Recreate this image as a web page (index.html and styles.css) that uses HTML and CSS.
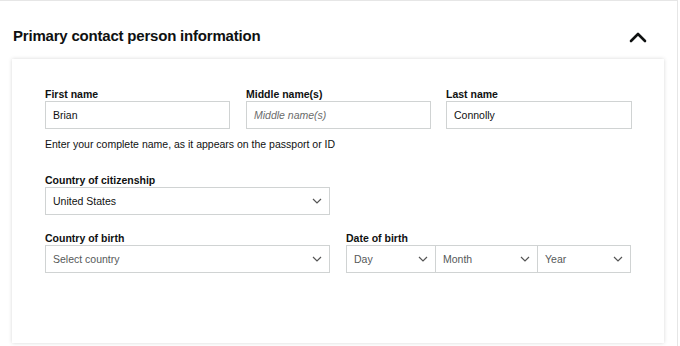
FILE: index.html
```html
<!DOCTYPE html>
<html>
<head>
<meta charset="utf-8">
<link rel="stylesheet" href="styles.css">
</head>
<body>
<div class="page">
  <div class="section-head">
    <h2 class="title">Primary contact person information</h2>
    <svg class="collapse" width="18" height="12" viewBox="0 0 18 12"><polyline points="2,10 9,3 16,10" fill="none" stroke="#0f1111" stroke-width="2.6" stroke-linecap="round" stroke-linejoin="round"/></svg>
  </div>
  <div class="card">
    <div class="row3">
      <div class="field">
        <label class="lbl">First name</label>
        <div class="input"><span class="val">Brian</span></div>
      </div>
      <div class="field">
        <label class="lbl">Middle name(s)</label>
        <div class="input"><span class="ph">Middle name(s)</span></div>
      </div>
      <div class="field">
        <label class="lbl">Last name</label>
        <div class="input"><span class="val">Connolly</span></div>
      </div>
    </div>
    <p class="hint">Enter your complete name, as it appears on the passport or ID</p>
    <div class="row2 first">
      <div class="field">
        <label class="lbl">Country of citizenship</label>
        <div class="input select"><span class="val">United States</span><svg class="chev" width="10" height="6" viewBox="0 0 10 6"><polyline points="1,1 5,5 9,1" fill="none" stroke="#555" stroke-width="1.2"/></svg></div>
      </div>
      <div class="field"></div>
    </div>
    <div class="row2">
      <div class="field">
        <label class="lbl">Country of birth</label>
        <div class="input select"><span class="sel">Select country</span><svg class="chev" width="10" height="6" viewBox="0 0 10 6"><polyline points="1,1 5,5 9,1" fill="none" stroke="#555" stroke-width="1.2"/></svg></div>
      </div>
      <div class="field">
        <label class="lbl">Date of birth</label>
        <div class="dob">
          <div class="input select day"><span class="sel">Day</span><svg class="chev" width="10" height="6" viewBox="0 0 10 6"><polyline points="1,1 5,5 9,1" fill="none" stroke="#555" stroke-width="1.2"/></svg></div>
          <div class="input select month"><span class="sel">Month</span><svg class="chev" width="10" height="6" viewBox="0 0 10 6"><polyline points="1,1 5,5 9,1" fill="none" stroke="#555" stroke-width="1.2"/></svg></div>
          <div class="input select year"><span class="sel">Year</span><svg class="chev" width="10" height="6" viewBox="0 0 10 6"><polyline points="1,1 5,5 9,1" fill="none" stroke="#555" stroke-width="1.2"/></svg></div>
        </div>
      </div>
    </div>
  </div>
</div>
</body>
</html>
```
FILE: styles.css
```css
* { box-sizing: border-box; }
html, body { margin: 0; padding: 0; background: #fff; }
body { font-family: "Liberation Sans", Arial, sans-serif; color: #0f1111; }
.page {
  width: 678px;
  height: 346px;
  border-top: 1px solid #e6e6e6;
  border-right: 1px solid #e6e6e6;
  overflow: hidden;
}
.section-head {
  display: flex;
  align-items: center;
  justify-content: space-between;
  padding: 0 30px 0 13px;
  height: 58px;
}
.title {
  margin: 11px 0 0 0;
  font-size: 15px;
  font-weight: bold;
  letter-spacing: -0.2px;
}
.collapse { margin-top: 13px; }
.card {
  margin-left: 12px;
  width: 652px;
  height: 284px;
  background: #fff;
  box-shadow: 0 0 4px rgba(0,0,0,0.16);
  padding: 29px 33px 0 33px;
}
.row3 {
  display: grid;
  grid-template-columns: 185px 185px 185px;
  column-gap: 16px;
}
.row3 .field:nth-child(3) { margin-left: -1px; }
.row2 {
  display: grid;
  grid-template-columns: 285px 285px;
  column-gap: 16px;
  margin-top: 17px;
}
.row2.first { margin-top: 23px; }
.lbl {
  display: block;
  font-size: 10.5px;
  font-weight: bold;
  line-height: 13px;
  margin-bottom: 0;
}
.input {
  height: 28px;
  border: 1px solid #d0d3d3;
  display: flex;
  align-items: center;
  padding: 0 7px;
  font-size: 10.5px;
  background: #fff;
}
.val { color: #0f1111; }
.ph { color: #6b6b6b; font-style: italic; }
.sel { color: #565959; }
.select { justify-content: space-between; }
.hint {
  margin: 9px 0 0 0;
  font-size: 10.5px;
  line-height: 13px;
}
.dob { display: flex; }
.dob .day { width: 90px; }
.dob .month { width: 102px; border-left: none; }
.dob .year { width: 93px; border-left: none; }
```
